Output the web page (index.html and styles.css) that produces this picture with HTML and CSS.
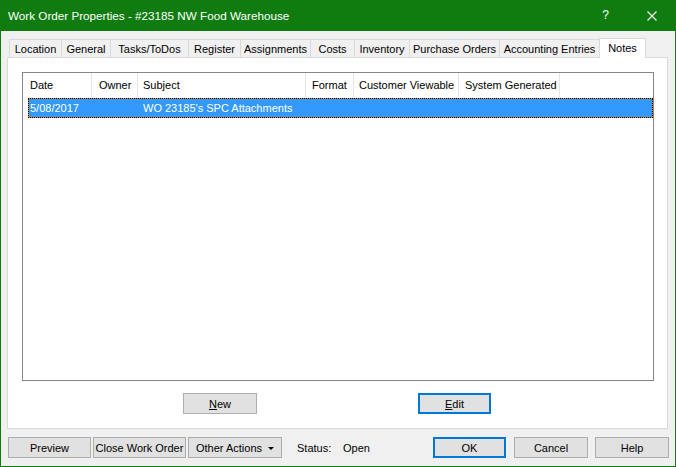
FILE: index.html
```html
<!DOCTYPE html>
<html>
<head>
<meta charset="utf-8">
<link rel="stylesheet" href="styles.css">
</head>
<body>
<div class="window">
  <div class="titlebar">
    <span class="title">Work Order Properties - #23185 NW Food Warehouse</span>
    <span class="tb-help">?</span>
    <svg class="tb-close" width="10" height="10" viewBox="0 0 10 10"><path d="M0.5 0.5L9.5 9.5M9.5 0.5L0.5 9.5" stroke="#fff" stroke-width="1.1" fill="none"/></svg>
  </div>
  <div class="content">
    <div class="tabs">
      <div class="tab w-location">Location</div>
      <div class="tab w-general">General</div>
      <div class="tab w-tasks">Tasks/ToDos</div>
      <div class="tab w-register">Register</div>
      <div class="tab w-assign">Assignments</div>
      <div class="tab w-costs">Costs</div>
      <div class="tab w-inv">Inventory</div>
      <div class="tab w-po">Purchase Orders</div>
      <div class="tab w-acct">Accounting Entries</div>
      <div class="tab active w-notes">Notes</div>
    </div>
    <div class="panel">
      <div class="list">
        <div class="lhead">
          <div class="hc c-date">Date</div>
          <div class="hc c-owner">Owner</div>
          <div class="hc c-subject">Subject</div>
          <div class="hc c-format">Format</div>
          <div class="hc c-cust">Customer Viewable</div>
          <div class="hc c-sys">System Generated</div>
        </div>
        <div class="lrow selected">
          <div class="rc r-date">5/08/2017</div>
          <div class="rc r-owner"></div>
          <div class="rc r-subject">WO 23185's SPC Attachments</div>
        </div>
      </div>
      <div class="panel-buttons">
        <button class="btn b-new"><u>N</u>ew</button>
        <button class="btn default b-edit"><u>E</u>dit</button>
      </div>
    </div>
    <div class="footer">
      <button class="btn b-preview">Preview</button>
      <button class="btn b-close">Close Work Order</button>
      <button class="btn b-other">Other Actions <span class="caret"></span></button>
      <span class="status-label">Status:</span>
      <span class="status-value">Open</span>
      <button class="btn default b-ok">OK</button>
      <button class="btn b-cancel">Cancel</button>
      <button class="btn b-help">Help</button>
    </div>
  </div>
</div>
</body>
</html>
```

FILE: styles.css
```css
* { box-sizing: border-box; }
html, body { margin: 0; padding: 0; background: #f0f0f0; }
body {
  font-family: "Liberation Sans", Arial, sans-serif;
  font-size: 11px;
  color: #000;
}
.window {
  width: 676px;
  height: 467px;
  border: 1px solid #107c10;
  border-top: 0;
  background: #f0f0f0;
  display: flex;
  flex-direction: column;
}
.titlebar {
  height: 31px;
  background: #107c10;
  color: #fff;
  display: flex;
  align-items: center;
  padding-left: 8px;
  margin: 0 -1px;
  padding-right: 19px;
}
.title { font-size: 11.7px; flex: 1; padding-bottom: 1px; }
.tb-help { font-size: 12px; margin-right: 38px; padding-bottom: 1px; }
.tb-close { display: block; }

.content {
  padding: 7px 0 0 6px;
  display: flex;
  flex-direction: column;
}
.tabs {
  display: flex;
  align-items: flex-end;
  padding-left: 2px;
  margin-bottom: -1px;
  position: relative;
  z-index: 1;
  height: 20px;
}
.tab {
  height: 18px;
  margin-bottom: 1px;
  border: 1px solid #d9d9d9;
  border-bottom: 0;
  margin-left: -1px;
  background: #f0f0f0;
  display: flex;
  align-items: center;
  justify-content: center;
  white-space: nowrap;
  padding-top: 1px;
}
.tab:first-child { margin-left: 0; }
.tab.active {
  height: 20px;
  margin-bottom: 0;
  background: #fff;
  padding-top: 0;
  padding-bottom: 2px;
}
.w-location { width: 53px; }
.w-general { width: 50px; }
.w-tasks { width: 79px; }
.w-register { width: 53px; }
.w-assign { width: 71px; }
.w-costs { width: 45px; }
.w-inv { width: 56px; }
.w-po { width: 91px; }
.w-acct { width: 101px; }
.w-notes { width: 47px; }

.panel {
  width: 661px;
  height: 372px;
  background: #fff;
  border: 1px solid #d9d9d9;
  padding: 14px 13px 14px 14px;
  display: flex;
  flex-direction: column;
}
.list {
  height: 309px;
  border: 1px solid #828790;
  background: #fff;
}
.lhead {
  display: flex;
  height: 24px;
}
.hc {
  border-right: 1px solid #e5e5e5;
  display: flex;
  align-items: center;
  padding-left: 6px;
  padding-bottom: 1px;
  white-space: nowrap;
}
.c-date { width: 69px; padding-left: 7px; }
.c-owner { width: 46px; padding-left: 7px; }
.c-subject { width: 168px; padding-left: 5px; }
.c-format { width: 48px; }
.c-cust { width: 105px; padding-left: 5px; }
.c-sys { width: 101px; }

.lrow {
  display: flex;
  height: 18px;
  margin: 2px 1px 0 6px;
  align-items: center;
  white-space: nowrap;
}
.lrow.selected {
  background: #3399ff;
  color: #fff;
  outline: 1px dotted #000;
  box-shadow: 0 0 0 1px #e08a1e;
}
.r-date { width: 109px; padding-left: 1px; }
.r-subject { padding-left: 5px; }

.panel-buttons {
  display: flex;
  gap: 161px;
  margin-top: 12px;
  padding-left: 161px;
}
.btn {
  font-family: "Liberation Sans", Arial, sans-serif;
  font-size: 11px;
  color: #000;
  height: 21px;
  background: #e1e1e1;
  border: 1px solid #adadad;
  padding: 0;
  margin: 0;
  display: flex;
  align-items: center;
  justify-content: center;
  white-space: nowrap;
}
.btn.default { border: 2px solid #0078d7; }
.b-new { width: 74px; }
.b-edit { width: 73px; }

.footer {
  display: flex;
  align-items: center;
  margin-top: 8px;
  margin-left: 1px;
  padding-right: 6px;
}
.b-preview { width: 83px; }
.b-close { width: 93px; margin-left: 2px; }
.b-other { width: 94px; margin-left: 2px; }
.caret {
  display: inline-block;
  width: 0;
  height: 0;
  border-left: 3px solid transparent;
  border-right: 3px solid transparent;
  border-top: 3px solid #000;
  margin-left: 6px;
  margin-top: 1px;
}
.status-label { margin-left: 15px; width: 46px; }
.status-value { }
.b-ok { width: 73px; margin-left: auto; }
.b-cancel { width: 74px; margin-left: 8px; }
.b-help { width: 74px; margin-left: 7px; }
```
